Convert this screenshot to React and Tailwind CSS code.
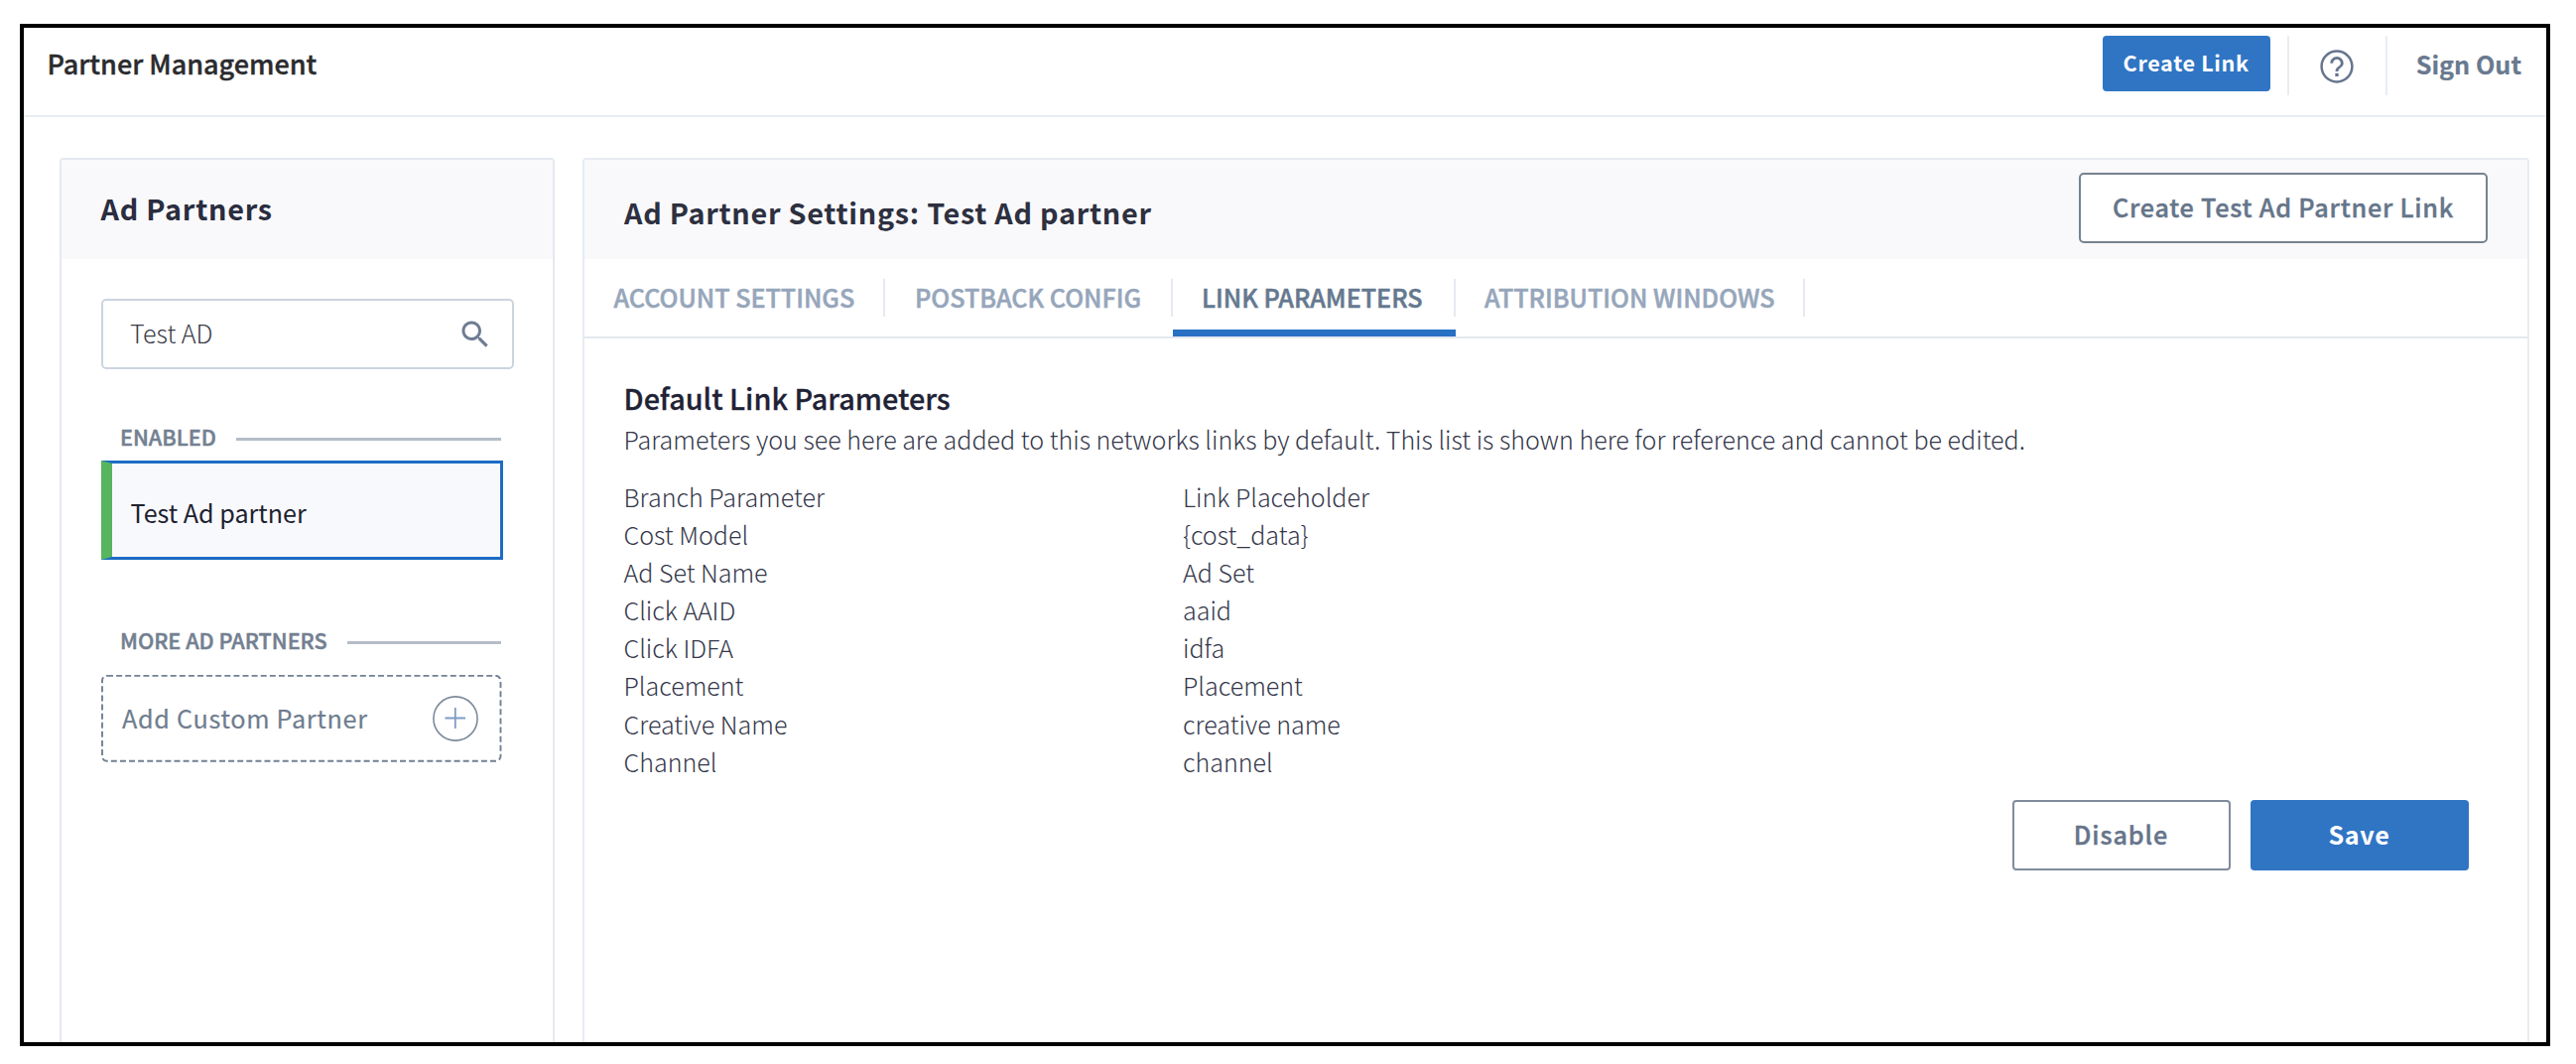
import React from "react";

const parameters = [
  ["Branch Parameter", "Link Placeholder"],
  ["Cost Model", "{cost_data}"],
  ["Ad Set Name", "Ad Set"],
  ["Click AAID", "aaid"],
  ["Click IDFA", "idfa"],
  ["Placement", "Placement"],
  ["Creative Name", "creative name"],
  ["Channel", "channel"],
];

const tabs = [
  { label: "ACCOUNT SETTINGS", width: "w-[303px] pl-[29.5px]" },
  { label: "POSTBACK CONFIG", width: "w-[290px] pl-[30px]" },
  { label: "LINK PARAMETERS", width: "w-[285px] pl-[29px]", active: true },
  { label: "ATTRIBUTION WINDOWS", width: "w-[352px] pl-[29px]" },
];

function HelpIcon() {
  return (
    <svg viewBox="0 0 24 24" className="size-10" fill="#65758d">
      <path d="M11 18h2v-2h-2v2zm1-16C6.48 2 2 6.48 2 12s4.48 10 10 10 10-4.48 10-10S17.52 2 12 2zm0 18.500c-4.690 0-8.500-3.810-8.500-8.500s3.810-8.500 8.500-8.500 8.500 3.810 8.500 8.500-3.810 8.500-8.500 8.500zM12 6c-2.210 0-4 1.790-4 4h1.700c0-1.260 1.040-2.300 2.300-2.300s2.300 1.040 2.300 2.300c0 2-3.150 1.750-3.150 5h1.700c0-2.250 3.150-2.500 3.150-5 0-2.210-1.790-4-4-4z" />
    </svg>
  );
}

function SearchIcon() {
  return (
    <svg viewBox="0 0 24 24" className="size-9" fill="#6f7d92">
      <path d="M15.5 14h-.79l-.28-.27C15.41 12.59 16 11.11 16 9.5 16 5.91 13.09 3 9.5 3S3 5.910 3 9.5 5.910 16 9.5 16c1.610 0 3.090-.59 4.230-1.570l.27.28v.79l5 4.990L20.490 19l-4.990-5zm-6 0C7.010 14 5 11.990 5 9.500S7.010 5 9.500 5 14 7.010 14 9.500 11.990 14 9.500 14z" />
    </svg>
  );
}

function AddIcon() {
  return (
    <svg viewBox="0 0 46 46" className="size-[46px]" fill="none">
      <circle cx="23" cy="23" r="22.1" stroke="#7d8b9b" strokeWidth="1.6" />
      <path d="M12.5 22.5h20.5M22.8 12v21" stroke="#7d9cc4" strokeWidth="1.8" />
    </svg>
  );
}

function SectionLabel({ children }) {
  return (
    <div className="ml-[19px] flex h-[31px] w-[384px] items-center gap-[20px]">
      <span className="whitespace-nowrap pb-[2px] text-[21.6px] leading-[29px] font-medium text-[#738091] [-webkit-text-stroke:0.5px]">{children}</span>
      <span className="mt-[4px] h-[3px] flex-1 bg-[#b5bdc7]" />
    </div>
  );
}

function AppHeader() {
  return (
    <header className="flex h-[90px] shrink-0 items-start border-b-2 border-[#e8edf2] pt-2">
      <h1 className="ml-[23.5px] flex-1 text-[27px] leading-[56px] font-medium text-[#2b2b2e] [-webkit-text-stroke:0.4px]">Partner Management</h1>
      <button className="h-[56px] w-[169px] rounded-[4px] bg-[#3075c4] pb-[4px] text-center text-[21.6px] leading-[51px] font-bold tracking-[0.65px] text-white">
        Create Link
      </button>
      <span className="ml-[17px] h-[60px] w-[2px] bg-[#e8edf2]" />
      <span className="flex h-[61px] w-[97px] items-center justify-center">
        <HelpIcon />
      </span>
      <span className="h-[60px] w-[2px] bg-[#e8edf2]" />
      <a className="mr-[25px] ml-[29px] text-[25.2px] leading-[57px] font-bold text-[#69798f] [-webkit-text-stroke:0.2px]">Sign Out</a>
    </header>
  );
}

function PartnerList() {
  return (
    <aside className="w-[499px] shrink-0 rounded-t-[4px] border-2 border-b-0 border-[#e4e9ef]">
      <h2 className="h-[100px] bg-[#f9f9fc] pl-[39.5px] text-[28.8px] leading-[98px] font-bold tracking-[0.75px] text-[#2a2d3f]">
        Ad Partners
      </h2>
      <div className="pl-10">
        <div className="mt-10 flex h-[71px] w-[416px] items-center justify-between rounded-[5px] border-2 border-[#ccd4df] pr-[19px] pl-[27px]">
          <span className="pb-[3px] text-[25.2px] leading-[40px] font-light text-[#3a3c48]">Test AD</span>
          <SearchIcon />
        </div>
        <div className="mt-[53px]">
          <SectionLabel>ENABLED</SectionLabel>
        </div>
        <div className="mt-2 h-[100px] w-[405px] border-[3px] border-l-[11px] border-[#1c6cc4] border-l-[#57b560] bg-[#f8f9fd] pl-[18.5px] text-[25.1px] leading-[98px] text-[#20212f]">
          Test Ad partner
        </div>
        <div className="mt-[66px]">
          <SectionLabel>MORE AD PARTNERS</SectionLabel>
        </div>
        <div className="relative mt-[19px] flex h-[88px] w-[404px] items-center justify-between pr-[24px] pl-[21px]">
          <svg className="absolute inset-0 h-full w-full" fill="none">
            <rect x="1" y="0.8" width="401.5" height="86" rx="5" stroke="#718095" strokeWidth="1.9" strokeDasharray="6 3.1" />
          </svg>
          <span className="pb-[2px] text-[25.2px] leading-[40px] tracking-[0.7px] text-[#6f7d8f] [-webkit-text-stroke:0.2px]">Add Custom Partner</span>
          <AddIcon />
        </div>
      </div>
    </aside>
  );
}

function PartnerSettings() {
  return (
    <main className="mr-[17px] flex-1 rounded-t-[4px] border-2 border-b-0 border-[#e7ecf2]">
      <div className="flex h-[100px] items-start justify-between bg-[#f9f9fc] pr-[40px] pl-10">
        <h2 className="text-[28.8px] leading-[105px] font-bold tracking-[0.72px] text-[#2d303f]">
          Ad Partner Settings: Test Ad partner
        </h2>
        <button className="mt-[13px] h-[71px] w-[412px] rounded-[5px] border-2 border-[#75838f] bg-white pb-[3px] text-[25.2px] leading-[63px] font-medium tracking-[0.78px] text-[#65758a] [-webkit-text-stroke:0.4px]">
          Create Test Ad Partner Link
        </button>
      </div>
      <nav className="flex h-[80px] border-b-2 border-[#e3e8ef]">
        {tabs.map((tab) => (
          <div key={tab.label} className={`relative flex h-[78px] items-center ${tab.width}`}>
            <span className={`flex-1 whitespace-nowrap pb-[3px] text-[25.1px] leading-[40px] font-medium [-webkit-text-stroke:0.5px] ${tab.active ? "text-[#65788f]" : "text-[#96a6bb]"}`}>
              {tab.label}
            </span>
            <span className="h-[38px] w-[2px] bg-[#e6eaf0]" />
            {tab.active && <span className="absolute right-0 bottom-0 left-0 h-[7px] bg-[#2870c4]" />}
          </div>
        ))}
      </nav>
      <section className="pr-[59.5px] pl-[39.5px] text-[25.05px] font-light text-[#34374a]">
        <h3 className="mt-[39px] text-[28.8px] leading-[42px] font-medium text-[#1f2235] [-webkit-text-stroke:0.3px]">Default Link Parameters</h3>
        <p className="leading-[41px]">
          Parameters you see here are added to this networks links by default. This list is shown here for reference and cannot be edited.
        </p>
        <div className="mt-[18px]">
          {parameters.map(([name, placeholder]) => (
            <div key={name} className="flex leading-[38.1px]">
              <span className="w-[563.5px]">{name}</span>
              <span>{placeholder}</span>
            </div>
          ))}
        </div>
        <div className="mt-5 flex justify-end gap-[20px]">
          <button className="h-[71px] w-[220px] rounded-[4px] border-2 border-[#808c9c] bg-white pb-[2px] text-[25.2px] leading-[65px] font-medium tracking-[0.9px] text-[#66748a] [-webkit-text-stroke:0.4px]">
            Disable
          </button>
          <button className="h-[71px] w-[220px] rounded-[4px] bg-[#3075c4] pb-[2px] text-[25.2px] leading-[69px] font-bold tracking-[0.6px] text-white">
            Save
          </button>
        </div>
      </section>
    </main>
  );
}

export default function App() {
  return (
    <div className="flex h-[1072px] w-[2596px] bg-white pt-6 pl-5 font-['Noto_Sans_CJK_SC','Noto_Sans',sans-serif]">
      <div className="flex h-[1030px] w-[2550px] flex-col border-4 border-black bg-white">
        <AppHeader />
        <div className="flex min-h-0 flex-1 gap-7 pt-[41px] pl-9">
          <PartnerList />
          <PartnerSettings />
        </div>
      </div>
    </div>
  );
}
